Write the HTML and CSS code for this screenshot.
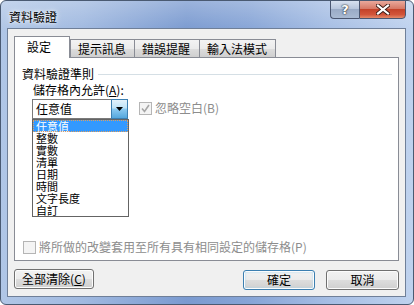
FILE: index.html
```html
<!DOCTYPE html>
<html lang="zh-Hant">
<head>
    <meta charset="UTF-8">
    <meta name="viewport" content="width=device-width, initial-scale=1.0">
    <title>資料驗證</title>
    <link rel="stylesheet" href="styles.css">
</head>
<body>
    <div class="window">
        <div class="titlebar">
            <span class="title">資料驗證</span>
            <div class="caption-btns">
                <div class="cap-btn help">?</div>
                <div class="cap-btn close">
                    <svg width="14" height="11" viewBox="0 0 14 11">
                        <path d="M2 1.5 L12 9.5 M12 1.5 L2 9.5" stroke="#3a1a14" stroke-width="4" stroke-linecap="square"/>
                        <path d="M2 1.5 L12 9.5 M12 1.5 L2 9.5" stroke="#ffffff" stroke-width="2.2" stroke-linecap="square"/>
                    </svg>
                </div>
            </div>
        </div>

        <div class="client">
            <div class="tabs">
                <div class="tab active">設定</div>
                <div class="tab">提示訊息</div>
                <div class="tab">錯誤提醒</div>
                <div class="tab">輸入法模式</div>
            </div>

            <div class="panel">
                <div class="group-title">
                    <span>資料驗證準則</span>
                    <div class="group-line"></div>
                </div>

                <div class="allow-label">儲存格內允許(<u>A</u>):</div>

                <div class="combo-row">
                    <div class="combo">
                        <div class="combo-value">任意值</div>
                        <div class="combo-btn">
                            <svg width="7" height="4" viewBox="0 0 7 4"><path d="M0 0 H7 L3.5 4 Z" fill="#000"/></svg>
                        </div>
                        <ul class="droplist">
                            <li class="selected">任意值</li>
                            <li>整數</li>
                            <li>實數</li>
                            <li>清單</li>
                            <li>日期</li>
                            <li>時間</li>
                            <li>文字長度</li>
                            <li>自訂</li>
                        </ul>
                    </div>

                    <label class="check disabled">
                        <span class="box">
                            <svg width="11" height="11" viewBox="0 0 11 11"><path d="M2 5.5 L4.5 8.5 L9 2" fill="none" stroke="#a6a6a6" stroke-width="1.6"/></svg>
                        </span>
                        忽略空白(B)
                    </label>
                </div>

                <label class="check disabled bottom-check">
                    <span class="box"></span>
                    將所做的改變套用至所有具有相同設定的儲存格(P)
                </label>
            </div>

            <div class="buttons">
                <button class="btn clear">全部清除(<u>C</u>)</button>
                <div class="right-btns">
                    <button class="btn default">確定</button>
                    <button class="btn">取消</button>
                </div>
            </div>
        </div>
    </div>
</body>
</html>
```

FILE: styles.css
```css
html, body {
    margin: 0;
    padding: 0;
    background: #ffffff;
}

body {
    font-family: "Noto Sans CJK TC", "Noto Sans CJK SC", sans-serif;
    font-size: 12px;
    color: #000;
}

.window {
    width: 414px;
    height: 305px;
    box-sizing: border-box;
    border: 1px solid #4a5a72;
    border-radius: 6px;
    background:
        linear-gradient(180deg, rgba(255,255,255,0.25), rgba(255,255,255,0) 30px),
        linear-gradient(90deg, #b0c6e6 0%, #a0b9e0 20%, #7a9ad0 45%, #86a4d6 60%, #a6bee4 80%, #bfd2ee 100%);
    display: flex;
    flex-direction: column;
    overflow: hidden;
}

.titlebar {
    height: 27px;
    display: flex;
    justify-content: space-between;
    align-items: flex-start;
}

.title {
    margin: 9px 0 0 8px;
    line-height: 14px;
    color: #000;
    text-shadow: 0 0 6px rgba(255,255,255,0.9), 0 0 3px rgba(255,255,255,0.9);
}

.caption-btns {
    display: flex;
    margin: -1px 7px 0 0;
}

.cap-btn {
    height: 19px;
    box-sizing: border-box;
    border: 1px solid #4a5670;
    display: flex;
    align-items: center;
    justify-content: center;
}

.help {
    width: 29px;
    border-right: none;
    border-radius: 0 0 0 4px;
    background: linear-gradient(180deg, #d7e1ef 0%, #b8c6dc 45%, #9aabc6 50%, #a9bad3 100%);
    color: #fff;
    font-family: "DejaVu Sans", sans-serif;
    font-weight: bold;
    font-size: 13px;
    text-shadow: 0 0 2px #333, 0 0 1px #000;
}

.close {
    width: 47px;
    border-radius: 0 0 4px 0;
    background: linear-gradient(180deg, #e9a99c 0%, #d67966 45%, #c4432a 50%, #d2553a 80%, #e38a6a 100%);
}

.client {
    flex: 1;
    margin: 0 7px 7px 6px;
    border: 1px solid #6f7f98;
    background: #f0f0f0;
    display: flex;
    flex-direction: column;
    padding: 0 6px;
}

.tabs {
    display: flex;
    align-items: flex-end;
    height: 28px;
    position: relative;
    z-index: 1;
}

.tab {
    height: 18px;
    line-height: 17px;
    padding: 0 7px;
    box-sizing: border-box;
    border: 1px solid #898c95;
    border-bottom: none;
    margin-left: -1px;
    background: linear-gradient(180deg, #f3f3f3 0%, #ebebeb 50%, #dddddd 51%, #cfcfcf 100%);
}

.tab:nth-child(2) { width: 65px; margin-left: 0; }
.tab:nth-child(3) { width: 66px; }
.tab:nth-child(4) { width: 77px; }

.tab.active {
    width: 56px;
    height: 22px;
    line-height: 20px;
    padding-left: 12px;
    margin-left: 0;
    margin-bottom: -1px;
    background: #ffffff;
}

.panel {
    height: 204px;
    box-sizing: border-box;
    border: 1px solid #898c95;
    background: #ffffff;
    display: flex;
    flex-direction: column;
    padding: 9px 6px 6px 7px;
}

.group-title {
    display: flex;
    align-items: center;
    line-height: 14px;
}

.group-line {
    flex: 1;
    height: 1px;
    background: #d5dfe5;
    margin: 1px 0 0 4px;
}

.allow-label {
    margin: 2px 0 0 11px;
    line-height: 14px;
}

.combo-row {
    display: flex;
    align-items: flex-start;
    margin: 2px 0 0 10px;
}

.combo {
    position: relative;
    width: 96px;
    height: 20px;
    box-sizing: border-box;
    border: 1px solid #7a7a7a;
    background: #fff;
    display: flex;
}

.combo-value {
    flex: 1;
    line-height: 18px;
    padding-left: 3px;
}

.combo-btn {
    width: 17px;
    box-sizing: border-box;
    border: 1px solid #3c7fb1;
    margin: -1px -1px -1px 0;
    background: linear-gradient(180deg, #e3f2fc 0%, #bee3f8 45%, #8ccaf1 50%, #54a7dd 100%);
    display: flex;
    align-items: center;
    justify-content: center;
}

.droplist {
    position: absolute;
    left: -1px;
    top: 19px;
    width: 97px;
    box-sizing: border-box;
    margin: 0;
    padding: 0;
    list-style: none;
    border: 1px solid #646464;
    background: #fff;
    z-index: 2;
}

.droplist li {
    height: 12px;
    line-height: 12px;
    font-size: 11px;
    padding-left: 3px;
    white-space: nowrap;
}

.droplist li.selected {
    background: #3399ff;
    color: #fff;
    outline: 1px dotted #e0a060;
    outline-offset: -1px;
}

.check {
    display: flex;
    align-items: center;
    line-height: 14px;
}

.check.disabled {
    color: #8d8d8d;
}

.combo-row .check {
    margin: 2px 0 0 11px;
}

.box {
    width: 13px;
    height: 13px;
    box-sizing: border-box;
    border: 1px solid #b5b5b5;
    background: #f4f4f4;
    margin-right: 3px;
    display: flex;
    align-items: center;
    justify-content: center;
}

.bottom-check {
    margin-top: auto;
    margin-left: 1px;
}

.buttons {
    display: flex;
    justify-content: space-between;
    margin-top: 9px;
}

.right-btns {
    display: flex;
    gap: 11px;
}

.btn {
    font-family: inherit;
    font-size: 12px;
    height: 20px;
    width: 73px;
    padding: 0;
    box-sizing: border-box;
    border: 1px solid #707070;
    border-radius: 3px;
    background: linear-gradient(180deg, #f2f2f2 0%, #ebebeb 50%, #dddddd 51%, #cfcfcf 100%);
    box-shadow: inset 0 0 0 1px #fcfcfc;
    line-height: 16px;
    color: #000;
}

.btn.clear {
    width: 80px;
    margin-top: -1px;
}

.btn.default {
    width: 72px;
    border-color: #3c7fb1;
    box-shadow: inset 0 0 0 1px #fcfcfc, inset 0 0 2px 1px #9fd8f5;
}
```
